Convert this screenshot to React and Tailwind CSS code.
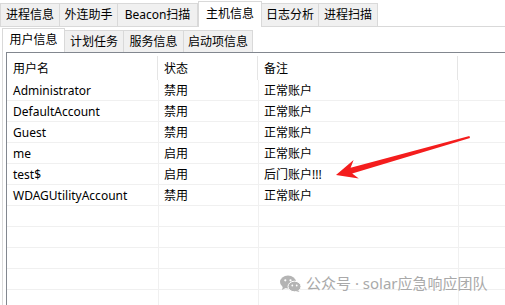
import React from 'react';

const outerTabs = [
  { label: '进程信息', w: 'w-[60px]' },
  { label: '外连助手', w: 'w-[58px]' },
  { label: 'Beacon扫描', w: 'w-[80px]' },
  { label: '主机信息', w: 'w-[64px]', active: true },
  { label: '日志分析', w: 'w-[57px]' },
  { label: '进程扫描', w: 'w-[59px]' },
];

const subTabs = [
  { label: '用户信息', w: 'w-[63px]', active: true },
  { label: '计划任务', w: 'w-[59px]' },
  { label: '服务信息', w: 'w-[60px]' },
  { label: '启动项信息', w: 'w-[69px]' },
];

const users = [
  ['Administrator', '禁用', '正常账户'],
  ['DefaultAccount', '禁用', '正常账户'],
  ['Guest', '禁用', '正常账户'],
  ['me', '启用', '正常账户'],
  ['test$', '启用', '后门账户!!!'],
  ['WDAGUtilityAccount', '禁用', '正常账户'],
  ['', '', ''],
  ['', '', ''],
  ['', '', ''],
  ['', '', ''],
  ['', '', ''],
];

const Arrow = () => (
  <svg className="absolute left-0 top-0 pointer-events-none" width="505" height="305">
    <polygon
      points="336,175 353.6,160.1 350.6,167.7 469.4,136.1 470,138.1 352.2,173.5 358.8,178.4"
      fill="#f41d1d"
    />
  </svg>
);

const Watermark = () => (
  <div className="absolute left-[280px] top-[274px] flex items-center gap-[5px] text-[15px] leading-[18px] text-[#a9a9a9]">
    <svg width="21" height="17" viewBox="0 0 21 17">
      <ellipse cx="8" cy="7" rx="8" ry="6.5" fill="#b4b4b4" />
      <path d="M3 11 L2 15 L6.5 12.5 Z" fill="#b4b4b4" />
      <ellipse cx="14.5" cy="11.5" rx="6.5" ry="5.3" fill="#b4b4b4" stroke="#fff" strokeWidth="1" />
      <path d="M18 15 L19.5 17 L15.5 16 Z" fill="#b4b4b4" />
      <circle cx="5.3" cy="5.3" r="1.1" fill="#fff" />
      <circle cx="10.5" cy="5.3" r="1.1" fill="#fff" />
      <circle cx="12.3" cy="10.5" r="0.9" fill="#fff" />
      <circle cx="16.7" cy="10.5" r="0.9" fill="#fff" />
    </svg>
    <span>公众号 · solar应急响应团队</span>
  </div>
);

export default function App() {
  return (
    <div
      className="relative w-[505px] h-[305px] overflow-hidden bg-white text-[12px] text-black"
      style={{ fontFamily: '"Noto Sans", "Noto Sans CJK SC", sans-serif' }}
    >
      {/* outer tabs */}
      <div className="flex items-end h-[27px] border-b border-[#d9d9d9]">
        {outerTabs.map((t, i) => (
          <div
            key={t.label}
            className={`${t.w} flex items-center justify-center leading-none border-t border-r border-[#d9d9d9] ${
              i === 0 ? 'border-l' : ''
            } ${
              t.active
                ? 'h-[26px] -mb-px bg-white border-l relative z-10 pb-[2px]'
                : 'h-[23px] bg-[#f0f0f0]'
            }`}
          >
            {t.label}
          </div>
        ))}
      </div>

      {/* sub tabs */}
      <div className="flex items-end h-[25px] pl-[2px]">
        {subTabs.map((t) => (
          <div
            key={t.label}
            className={`${t.w} flex items-center justify-center leading-none border-t border-r border-[#d9d9d9] ${
              t.active ? 'h-[24px] bg-white border-l pb-[1px]' : 'h-[22px] bg-[#f0f0f0]'
            }`}
          >
            {t.label}
          </div>
        ))}
      </div>

      {/* list view */}
      <div className="ml-[2px] pl-[3px] border-l border-[#dcdcdc] h-[253px]">
        <div className="h-full border-t border-l border-[#82878f]">
          <div className="flex h-[27px] pt-[3px]">
            <div className="w-[151px] border-r border-[#e5e5e5] pl-[6px] pt-[2px] flex items-center">用户名</div>
            <div className="w-[100px] border-r border-[#e5e5e5] pl-[6px] pt-[2px] flex items-center">状态</div>
            <div className="w-[200px] border-r border-[#e5e5e5] pl-[6px] pt-[2px] flex items-center">备注</div>
            <div className="flex-1" />
          </div>
          {users.map((u, i) => (
            <div key={i} className="flex h-[21px] border-b border-[#f0f0f0]">
              <div className="w-[152px] border-r border-[#f0f0f0] pl-[6px] pt-[2px] flex items-center">{u[0]}</div>
              <div className="w-[100px] border-r border-[#f0f0f0] pl-[5px] pt-[2px] flex items-center">{u[1]}</div>
              <div className="w-[200px] border-r border-[#f0f0f0] pl-[5px] pt-[2px] flex items-center">{u[2]}</div>
              <div className="flex-1" />
            </div>
          ))}
        </div>
      </div>

      <Watermark />
      <Arrow />
    </div>
  );
}
